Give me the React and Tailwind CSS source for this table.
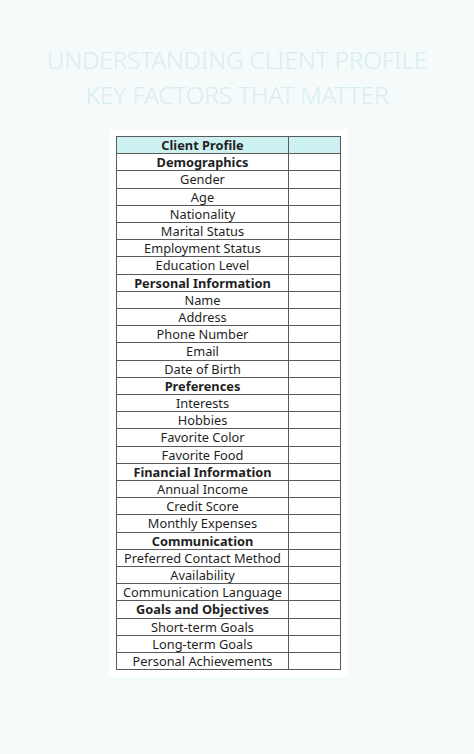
import React from "react";

const rows = [
  ["Demographics", true],
  ["Gender"],
  ["Age"],
  ["Nationality"],
  ["Marital Status"],
  ["Employment Status"],
  ["Education Level"],
  ["Personal Information", true],
  ["Name"],
  ["Address"],
  ["Phone Number"],
  ["Email"],
  ["Date of Birth"],
  ["Preferences", true],
  ["Interests"],
  ["Hobbies"],
  ["Favorite Color"],
  ["Favorite Food"],
  ["Financial Information", true],
  ["Annual Income"],
  ["Credit Score"],
  ["Monthly Expenses"],
  ["Communication", true],
  ["Preferred Contact Method"],
  ["Availability"],
  ["Communication Language"],
  ["Goals and Objectives", true],
  ["Short-term Goals"],
  ["Long-term Goals"],
  ["Personal Achievements"],
];

export default function App() {
  return (
    <div className="w-[474px] h-[754px] bg-[#f5fbfb] font-['Noto_Sans',sans-serif] overflow-hidden">
      <div className="pt-[42px] text-center text-[24.5px] leading-[35px] font-light text-[#d8eeed] tracking-[-0.2px]">
        <div>UNDERSTANDING CLIENT PROFILE</div>
        <div>KEY FACTORS THAT MATTER</div>
      </div>
      <div className="mt-[17px] ml-[109px] w-[239px] bg-white p-[7px]">
        <div className="border border-[#5a5a5a] text-[12.8px] leading-[16.2px] text-[#1f1f1f]">
          <div className="flex bg-[#cdf1f1]">
            <div className="w-[172px] border-r border-[#5a5a5a] text-center font-bold">Client Profile</div>
            <div className="flex-1"></div>
          </div>
          {rows.map(([label, bold]) => (
            <div key={label} className="flex border-t border-[#5a5a5a]">
              <div className={"w-[172px] border-r border-[#5a5a5a] text-center whitespace-nowrap " + (bold ? "font-bold" : "")}>
                {label}
              </div>
              <div className="flex-1"></div>
            </div>
          ))}
        </div>
      </div>
    </div>
  );
}
